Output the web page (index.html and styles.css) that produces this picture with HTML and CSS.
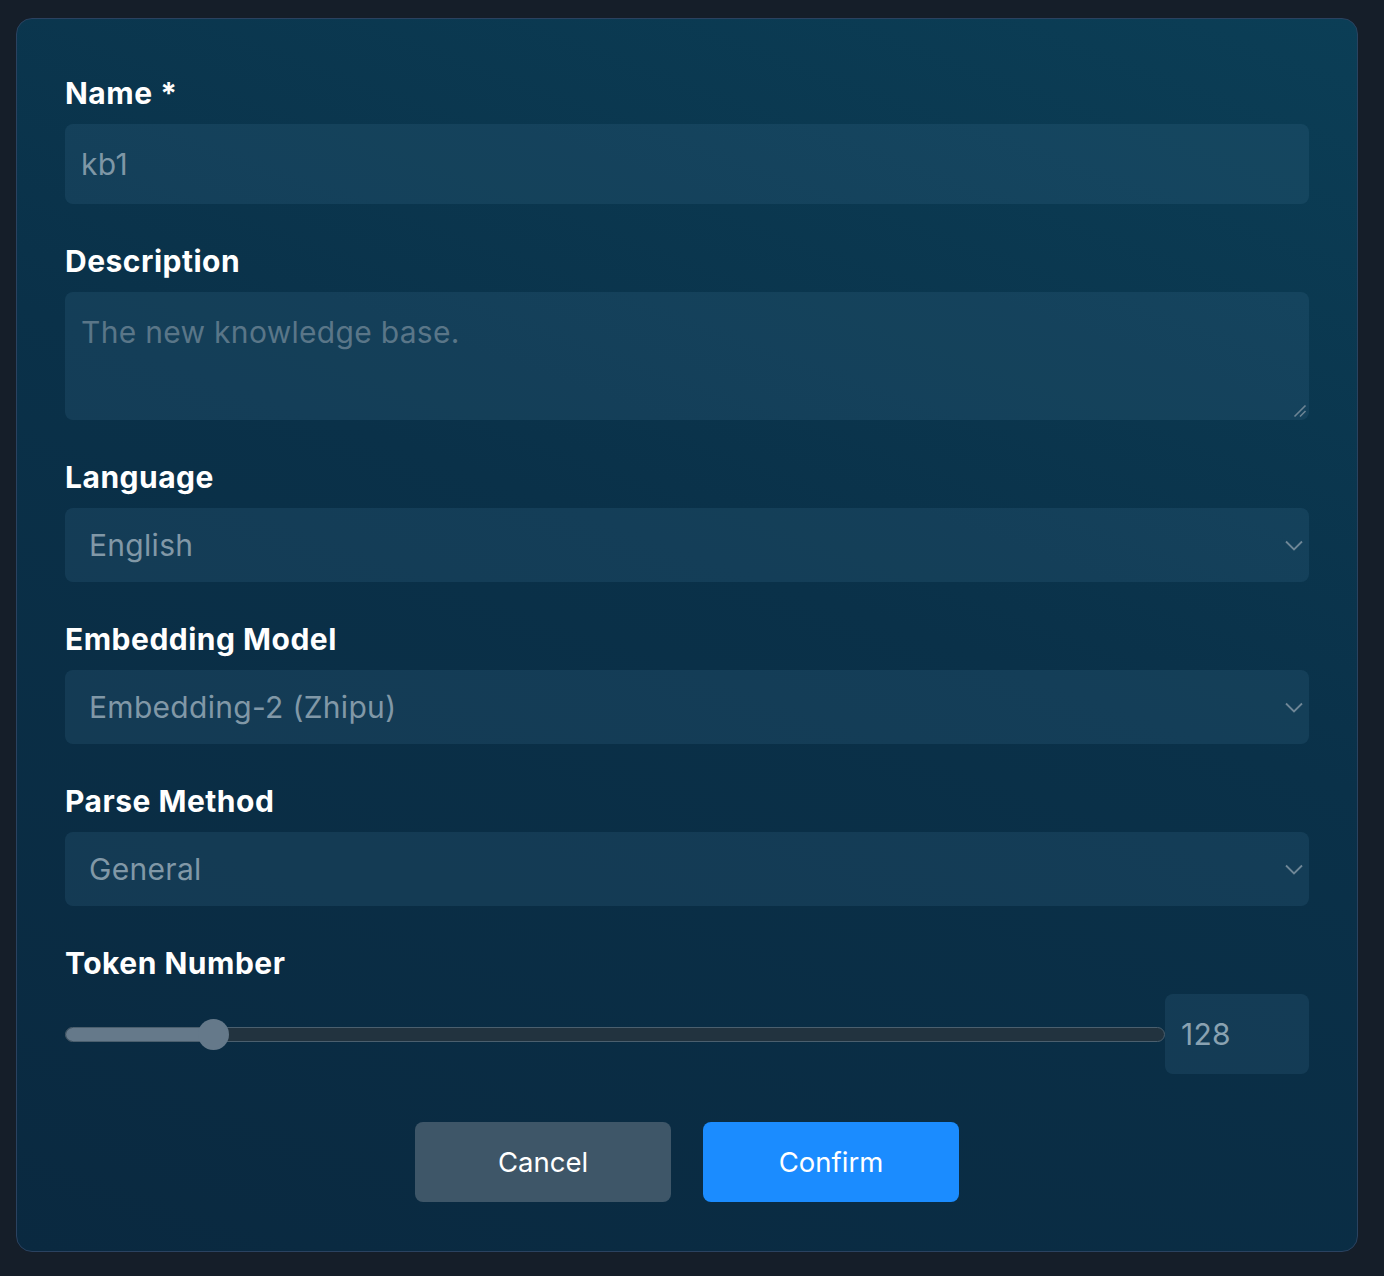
FILE: index.html
```html
<!DOCTYPE html>
<html lang="en">
<head>
<meta charset="utf-8">
<title>Create Knowledge Base</title>
<link rel="stylesheet" href="styles.css">
</head>
<body>
<div class="card">
  <form class="form">
    <div class="field">
      <label class="label" for="name">Name *</label>
      <input class="input" id="name" type="text" value="kb1">
    </div>
    <div class="field">
      <label class="label" for="desc">Description</label>
      <div class="textarea-wrap">
        <textarea class="input textarea" id="desc" placeholder="The new knowledge base."></textarea>
        <svg class="resizer" width="14" height="14" viewBox="0 0 14 14"><path d="M1.5 12.5 L12.5 1.5 M7 12.5 L12.5 7" fill="none" stroke="#6c8494" stroke-width="1.6"/></svg>
      </div>
    </div>
    <div class="field">
      <label class="label" for="lang">Language</label>
      <div class="select-wrap">
        <select class="select" id="lang"><option>English</option></select>
        <svg class="chevron" width="18" height="11" viewBox="0 0 18 11"><path d="M1 1.5 L9 9.5 L17 1.5" fill="none" stroke="#6f8797" stroke-width="1.8"/></svg>
      </div>
    </div>
    <div class="field">
      <label class="label" for="model">Embedding Model</label>
      <div class="select-wrap">
        <select class="select" id="model"><option>Embedding-2 (Zhipu)</option></select>
        <svg class="chevron" width="18" height="11" viewBox="0 0 18 11"><path d="M1 1.5 L9 9.5 L17 1.5" fill="none" stroke="#6f8797" stroke-width="1.8"/></svg>
      </div>
    </div>
    <div class="field">
      <label class="label" for="parse">Parse Method</label>
      <div class="select-wrap">
        <select class="select" id="parse"><option>General</option></select>
        <svg class="chevron" width="18" height="11" viewBox="0 0 18 11"><path d="M1 1.5 L9 9.5 L17 1.5" fill="none" stroke="#6f8797" stroke-width="1.8"/></svg>
      </div>
    </div>
    <div class="field">
      <span class="label">Token Number</span>
      <div class="slider-row">
        <div class="slider">
          <div class="track">
            <div class="fill" style="width: 148px"></div>
          </div>
          <div class="thumb" style="left: 133px"></div>
        </div>
        <input class="input number" type="text" value="128">
      </div>
    </div>
    <div class="actions">
      <button type="button" class="btn btn-cancel">Cancel</button>
      <button type="button" class="btn btn-confirm">Confirm</button>
    </div>
  </form>
</div>
</body>
</html>
```
FILE: styles.css
```css
* { box-sizing: border-box; }
html, body { margin: 0; padding: 0; }
body {
  background: #151e29;
  font-family: Inter, "Noto Sans", "Liberation Sans", sans-serif;
  padding: 18px 26px 24px 16px;
  min-height: 1276px;
}
.card {
  width: 1342px;
  height: 1234px;
  border: 1.5px solid #2a4260;
  border-radius: 16px;
  background: linear-gradient(200deg, #0b3e56 0%, #0a3149 45%, #0a2940 100%);
  padding: 56px 48px 48px 48px;
}
.form {
  display: flex;
  flex-direction: column;
}
.field {
  display: flex;
  flex-direction: column;
  margin-bottom: 39px;
}
.label {
  color: #ffffff;
  font-weight: 700;
  font-size: 30px;
  line-height: 36px;
  margin-bottom: 13px;
  letter-spacing: 0.5px;
}
.input {
  width: 100%;
  height: 80px;
  border: none;
  outline: none;
  border-radius: 8px;
  background: rgba(60, 110, 140, 0.22);
  color: #7f97a6;
  font-family: inherit;
  font-size: 30px;
  letter-spacing: 0.3px;
  padding: 0 16px;
}
.textarea-wrap {
  position: relative;
}
.textarea {
  display: block;
  height: 128px;
  padding: 20px 16px;
  resize: none;
  line-height: 40px;
}
.textarea::placeholder { color: #5a7688; }
.resizer {
  position: absolute;
  right: 2px;
  bottom: 2px;
}
.select-wrap {
  position: relative;
}
.select {
  appearance: none;
  -webkit-appearance: none;
  width: 100%;
  height: 74px;
  border: none;
  outline: none;
  border-radius: 8px;
  background: rgba(60, 110, 140, 0.22);
  color: #8198a7;
  font-family: inherit;
  font-size: 30px;
  letter-spacing: 0.3px;
  padding: 0 24px;
}
.chevron {
  position: absolute;
  right: 6px;
  top: 32px;
}
.slider-row {
  display: flex;
  align-items: center;
}
.slider {
  position: relative;
  flex: 1;
  height: 80px;
  display: flex;
  align-items: center;
}
.track {
  width: 100%;
  height: 15px;
  border-radius: 8px;
  background: #22333f;
  border: 1.5px solid #4b5f6e;
  overflow: hidden;
}
.fill {
  height: 100%;
  background: #65798a;
}
.thumb {
  position: absolute;
  top: 25px;
  width: 31px;
  height: 31px;
  border-radius: 50%;
  background: #65798a;
}
.number {
  width: 144px;
  flex: none;
  color: #8aa2b1;
}
.actions {
  display: flex;
  justify-content: center;
  gap: 32px;
  margin-top: 9px;
}
.btn {
  width: 256px;
  height: 80px;
  border: none;
  border-radius: 8px;
  color: #ffffff;
  font-family: inherit;
  font-size: 27.5px;
}
.btn-cancel { background: #3e5668; }
.btn-confirm { background: #1b8cff; }
```
